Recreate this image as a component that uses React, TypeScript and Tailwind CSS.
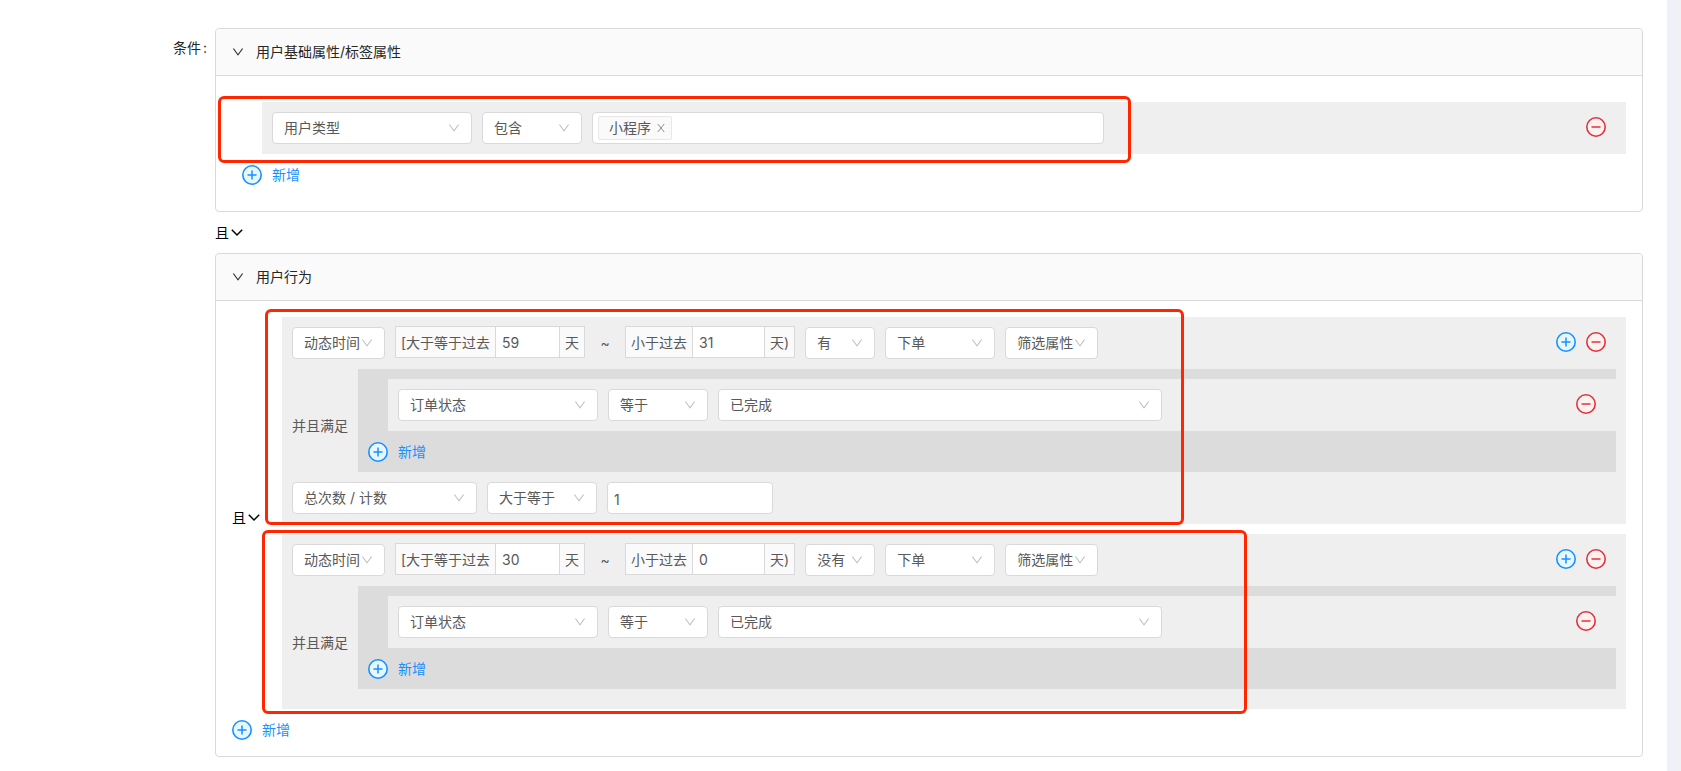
import React, { useState } from 'react';

const DownIcon: React.FC<{ className?: string }> = ({ className }) => (
  <svg viewBox="64 64 896 896" fill="currentColor" aria-hidden="true" className={className}>
    <path d="M884 256h-75c-5.1 0-9.9 2.5-12.9 6.6L512 654.2 227.9 262.6c-3-4.1-7.8-6.6-12.9-6.6h-75c-6.5 0-10.3 7.4-6.5 12.7l352.6 486.1c12.8 17.6 39 17.6 51.7 0l352.6-486.1c3.9-5.3.1-12.7-6.4-12.7z" />
  </svg>
);

const PlusCircle = () => (
  <svg viewBox="0 0 20 20" aria-hidden="true" className="block size-5 shrink-0">
    <circle cx="10" cy="10" r="9.2" fill="#e6f7ff" stroke="#1890ff" strokeWidth="1.6" />
    <path d="M10 5.5v9M5.5 10h9" stroke="#1890ff" strokeWidth="1.5" />
  </svg>
);

const MinusCircle = () => (
  <svg viewBox="0 0 20 20" aria-hidden="true" className="block size-5 shrink-0">
    <circle cx="10" cy="10" r="9.2" fill="#fff1f0" stroke="#e0323c" strokeWidth="1.6" />
    <path d="M5.5 10h9" stroke="#e0323c" strokeWidth="1.5" />
  </svg>
);

interface SelectProps {
  label: string;
  value: string;
  options?: string[];
  className: string;
}

const Select: React.FC<SelectProps> = ({ label, value, options = [], className }) => {
  const [selected, setSelected] = useState(value);

  return (
    <div className={`relative h-8 shrink-0 ${className}`}>
      <select
        aria-label={label}
        value={selected}
        onChange={(e) => setSelected(e.target.value)}
        className="block size-full appearance-none rounded border border-[#d9d9d9] bg-white pl-[11px] text-sm text-[#595959] outline-none"
      >
        {[value, ...options].map((option) => (
          <option key={option}>{option}</option>
        ))}
      </select>
      <DownIcon className="pointer-events-none absolute top-2.5 right-3 size-3 text-[#bfbfbf]" />
    </div>
  );
};

interface DayInputProps {
  prefix: string;
  suffix: string;
  value: string;
  inputClass: string;
}

const DayInput: React.FC<DayInputProps> = ({ prefix, suffix, value, inputClass }) => (
  <label className="-mt-px flex h-8 shrink-0 items-stretch border border-[#d9d9d9] bg-[#fafafa] leading-8">
    <span className="px-[5px]">{prefix}</span>
    <input
      type="text"
      defaultValue={value}
      className={`border-x border-[#d9d9d9] bg-white px-1.5 pt-0.5 outline-none ${inputClass}`}
    />
    <span className="px-[5px]">{suffix}</span>
  </label>
);

const AddButton: React.FC<{ className?: string }> = ({ className = '' }) => (
  <button type="button" className={`flex cursor-pointer items-center gap-2.5 leading-5 text-[#1890ff] ${className}`}>
    <PlusCircle />
    新增
  </button>
);

const IconButton: React.FC<{ label: string; children: React.ReactNode }> = ({ label, children }) => (
  <button type="button" aria-label={label} className="cursor-pointer">
    {children}
  </button>
);

const LogicToggle = () => (
  <button type="button" className="flex cursor-pointer items-center gap-0.5 leading-5 text-black">
    且
    <svg viewBox="0 0 12 12" fill="none" aria-hidden="true" className="size-3">
      <path d="M0.8 2.8L6 8l5.2-5.2" stroke="currentColor" strokeWidth="1.5" />
    </svg>
  </button>
);

// Red marker frame drawn over the form
const Highlight: React.FC<{ className: string }> = ({ className }) => (
  <div className={`pointer-events-none absolute z-10 rounded-md border-3 border-[#ff2600] ${className}`} />
);

interface PanelProps {
  title: string;
  children: React.ReactNode;
}

const Panel: React.FC<PanelProps> = ({ title, children }) => {
  const [open, setOpen] = useState(true);

  return (
    <section className="relative rounded border border-[#d9d9d9]">
      <button
        type="button"
        onClick={() => setOpen(!open)}
        className="flex w-full cursor-pointer items-center gap-3 rounded-t bg-[#fafafa] px-4 py-3 text-left leading-[22px] text-[#262626]"
      >
        <DownIcon className="size-3" />
        {title}
      </button>
      {open && <div className="border-t border-[#d9d9d9] p-4">{children}</div>}
    </section>
  );
};

interface BehaviorGroupProps {
  from: string;
  to: string;
  did: string;
  children?: React.ReactNode;
}

const BehaviorGroup: React.FC<BehaviorGroupProps> = ({ from, to, did, children }) => (
  <div className="relative mb-2.5 bg-[#efefef] pb-2.5">
    <div className="flex items-start gap-2.5 py-2.5 pl-2.5">
      <Select label="时间类型" value="动态时间" options={['固定时间']} className="w-[93px]" />
      <DayInput prefix="[大于等于过去" suffix="天" value={from} inputClass="w-[65px]" />
      <span className="w-5 text-center leading-8">~</span>
      <DayInput prefix="小于过去" suffix="天)" value={to} inputClass="w-[73px]" />
      <Select label="是否发生" value={did} options={[did === '有' ? '没有' : '有']} className="w-[70px]" />
      <Select label="事件" value="下单" className="w-[110px]" />
      <Select label="筛选属性" value="筛选属性" className="w-[93px]" />
      <div className="mt-[5px] mr-5 ml-auto flex gap-2.5">
        <IconButton label="新增">
          <PlusCircle />
        </IconButton>
        <IconButton label="删除">
          <MinusCircle />
        </IconButton>
      </div>
    </div>
    <div className="flex items-center gap-2.5 px-2.5">
      <span className="shrink-0">并且满足</span>
      <div className="mb-2.5 grow bg-[#dcdcdc] pt-2.5">
        <div className="ml-[30px] flex items-start gap-2.5 bg-[#efefef] p-2.5">
          <Select label="属性" value="订单状态" className="w-[200px]" />
          <Select label="条件" value="等于" options={['不等于']} className="w-[100px]" />
          <Select label="值" value="已完成" options={['未完成']} className="w-[444px]" />
          <div className="mt-[5px] mr-2.5 ml-auto">
            <IconButton label="删除">
              <MinusCircle />
            </IconButton>
          </div>
        </div>
        <AddButton className="px-2.5 pt-[11px] pb-2.5" />
      </div>
    </div>
    {children}
  </div>
);

const App: React.FC = () => {
  return (
    <div className="flex min-h-screen bg-[#eff1f6] pr-3.5 font-[Inter,'Noto_Sans_CJK_SC',sans-serif] text-sm text-[#595959]">
      <main className="flex grow bg-white pt-7 pr-6 pb-3.5">
        <div className="w-[215px] shrink-0 pt-2.5 pr-2 text-right leading-5 text-[#262626]">
          条件<span className="ml-0.5">:</span>
        </div>
        <div className="grow">
          <Panel title="用户基础属性/标签属性">
            <Highlight className="top-[67px] left-0.5 h-[67px] w-[913px]" />
            <div className="mt-2.5 ml-[30px] flex items-start gap-2.5 bg-[#efefef] p-2.5">
              <Select label="属性" value="用户类型" className="w-[200px]" />
              <Select label="条件" value="包含" options={['不包含']} className="w-[100px]" />
              <div className="flex h-8 w-[512px] items-center rounded border border-[#d9d9d9] bg-white px-[5px]">
                <span className="flex h-6 items-center gap-1.5 rounded-xs border border-[#e8e8e8] bg-[#fafafa] pr-1.5 pl-2.5">
                  小程序
                  <button type="button" aria-label="移除小程序" className="cursor-pointer text-[#8c8c8c]">
                    <svg viewBox="0 0 8 8" aria-hidden="true" className="block size-2">
                      <path d="M0.8 0l6.4 8M7.2 0L0.8 8" stroke="currentColor" />
                    </svg>
                  </button>
                </span>
              </div>
              <div className="mt-[5px] mr-2.5 ml-auto">
                <IconButton label="删除">
                  <MinusCircle />
                </IconButton>
              </div>
            </div>
            <AddButton className="px-2.5 pt-[11px] pb-2.5" />
          </Panel>

          <div className="flex h-[41px] items-center">
            <LogicToggle />
          </div>

          <Panel title="用户行为">
            <div className="flex items-center">
              <div className="w-[50px] shrink-0">
                <LogicToggle />
              </div>
              <div className="grow">
                <BehaviorGroup from="59" to="31" did="有">
                  <Highlight className="-top-2 -left-[17px] h-[216px] w-[919px]" />
                  <div className="flex gap-2.5 px-2.5">
                    <Select label="统计方式" value="总次数 / 计数" className="w-[185px]" />
                    <Select label="比较" value="大于等于" options={['小于等于']} className="w-[110px]" />
                    <input
                      type="text"
                      aria-label="次数"
                      defaultValue="1"
                      className="h-8 w-[166px] rounded border border-[#d9d9d9] bg-white px-1.5 pt-0.5 outline-none"
                    />
                  </div>
                </BehaviorGroup>
                <BehaviorGroup from="30" to="0" did="没有">
                  <Highlight className="-top-1 -left-5 h-[184px] w-[985px]" />
                </BehaviorGroup>
              </div>
            </div>
            <AddButton className="pt-px" />
          </Panel>
        </div>
      </main>
    </div>
  );
};

export default App;
